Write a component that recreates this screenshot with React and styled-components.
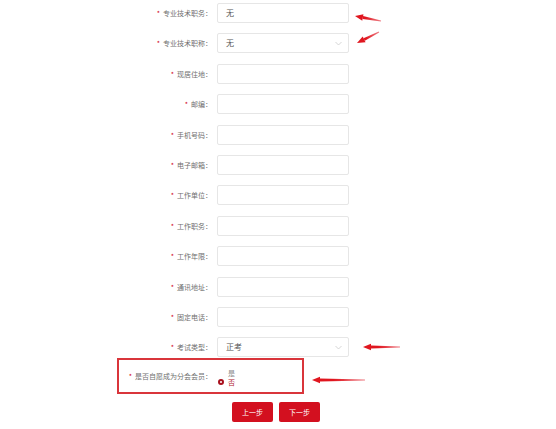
import React from 'react'
import styled, { createGlobalStyle } from 'styled-components'

const GlobalStyle = createGlobalStyle`
  html, body {
    margin: 0;
    padding: 0;
    background: #fff;
    font-family: "Noto Sans CJK SC", "Liberation Sans", sans-serif;
  }
`

const Page = styled.div`
  position: relative;
  width: 556px;
  height: 429px;
  overflow: hidden;
  background: #fff;
`

const Form = styled.div`
  display: flex;
  flex-direction: column;
  gap: 10.4px;
  padding-top: 3px;
  margin-left: 100px;
  width: 249px;
`

const Row = styled.div`
  display: flex;
  align-items: center;
  height: 20px;
`

const Label = styled.label`
  width: 112px;
  flex: none;
  text-align: right;
  font-size: 7px;
  line-height: 20px;
  color: #707070;
  white-space: nowrap;
  margin-right: 5px;
`

const Star = styled.span`
  color: #d0021b;
  margin-right: 3px;
`

const Input = styled.div`
  position: relative;
  flex: 1;
  height: 18px;
  border: 1px solid #e6e6e6;
  border-radius: 2px;
  background: #fff;
  font-size: 8px;
  line-height: 18px;
  color: #555;
  padding-left: 8px;
  box-sizing: content-box;
`

const Chevron = styled.svg`
  position: absolute;
  right: 6px;
  top: 7px;
`

const HighlightRow = styled.div`
  position: relative;
  display: flex;
  align-items: center;
  height: 36px;
  margin-top: 1px;
  margin-left: 100px;
  width: 249px;

  &::before {
    content: '';
    position: absolute;
    left: 17px;
    top: 0;
    width: 183px;
    height: 32px;
    border: 2px solid #d9353b;
  }
`

const Radios = styled.div`
  display: flex;
  flex-direction: column;
  padding-left: 1px;
  padding-top: 2px;
`

const Radio = styled.div`
  display: flex;
  align-items: center;
  height: 9px;
  font-size: 7px;
  color: ${p => (p.checked ? '#b0202c' : '#888')};
`

const Dot = styled.span`
  width: 2px;
  height: 2px;
  margin-right: 4px;
  border-radius: 50%;
  border: 2px solid ${p => (p.checked ? '#a8101d' : 'transparent')};
  background: ${p => (p.checked ? '#fff' : 'transparent')};
`

const Buttons = styled.div`
  display: flex;
  gap: 6px;
  margin-top: 8px;
  margin-left: 232px;
`

const Button = styled.button`
  width: 41px;
  height: 20px;
  padding: 0;
  border: none;
  border-radius: 2px;
  background: #d3101f;
  color: #fff;
  font-family: inherit;
  font-size: 7px;
`

const Arrows = styled.svg`
  position: absolute;
  left: 0;
  top: 0;
  pointer-events: none;
`

const fields = [
  { label: '专业技术职务：', value: '无' },
  { label: '专业技术职称：', value: '无', select: true },
  { label: '现居住地：' },
  { label: '邮编：' },
  { label: '手机号码：' },
  { label: '电子邮箱：' },
  { label: '工作单位：' },
  { label: '工作职务：' },
  { label: '工作年限：' },
  { label: '通讯地址：' },
  { label: '固定电话：' },
  { label: '考试类型：', value: '正考', select: true },
]

const arrows = [
  [381, 21, 355, 16],
  [379, 32, 357, 43],
  [400, 347, 363, 347],
  [365, 380, 312, 380],
]

const Arrow = ({ id, x1, y1, x2, y2 }) => {
  const a = Math.atan2(y2 - y1, x2 - x1)
  const len = 8
  const w = 3.2
  const bx = x2 - Math.cos(a) * len
  const by = y2 - Math.sin(a) * len
  const px = -Math.sin(a) * w
  const py = Math.cos(a) * w
  return (
    <g>
      <defs>
        <linearGradient id={id} gradientUnits="userSpaceOnUse" x1={x1} y1={y1} x2={x2} y2={y2}>
          <stop offset="0" stopColor="#ee8088" />
          <stop offset="0.6" stopColor="#e0161f" />
        </linearGradient>
      </defs>
      <polygon
        points={`${x1 + px * 0.15},${y1 + py * 0.15} ${bx + px * 0.45},${by + py * 0.45} ${bx - px * 0.45},${by - py * 0.45} ${x1 - px * 0.15},${y1 - py * 0.15}`}
        fill={`url(#${id})`}
      />
      <polygon points={`${x2},${y2} ${bx + px},${by + py} ${bx - px},${by - py}`} fill="#e0161f" />
    </g>
  )
}

export default function App() {
  return (
    <Page>
      <GlobalStyle />
      <Form>
        {fields.map((f, i) => (
          <Row key={i}>
            <Label>
              <Star>*</Star>
              {f.label}
            </Label>
            <Input>
              {f.value}
              {f.select && (
                <Chevron width="7" height="5" viewBox="0 0 7 5">
                  <path d="M0.5 1 L3.5 4 L6.5 1" fill="none" stroke="#ccc" strokeWidth="0.8" />
                </Chevron>
              )}
            </Input>
          </Row>
        ))}
      </Form>
      <HighlightRow>
        <Label>
          <Star>*</Star>
          是否自愿成为分会会员：
        </Label>
        <Radios>
          <Radio>
            <Dot />
            是
          </Radio>
          <Radio checked>
            <Dot checked />
            否
          </Radio>
        </Radios>
      </HighlightRow>
      <Buttons>
        <Button>上一步</Button>
        <Button>下一步</Button>
      </Buttons>
      <Arrows width="556" height="429">
        {arrows.map(([x1, y1, x2, y2], i) => (
          <Arrow key={i} id={`fade${i}`} x1={x1} y1={y1} x2={x2} y2={y2} />
        ))}
      </Arrows>
    </Page>
  )
}
